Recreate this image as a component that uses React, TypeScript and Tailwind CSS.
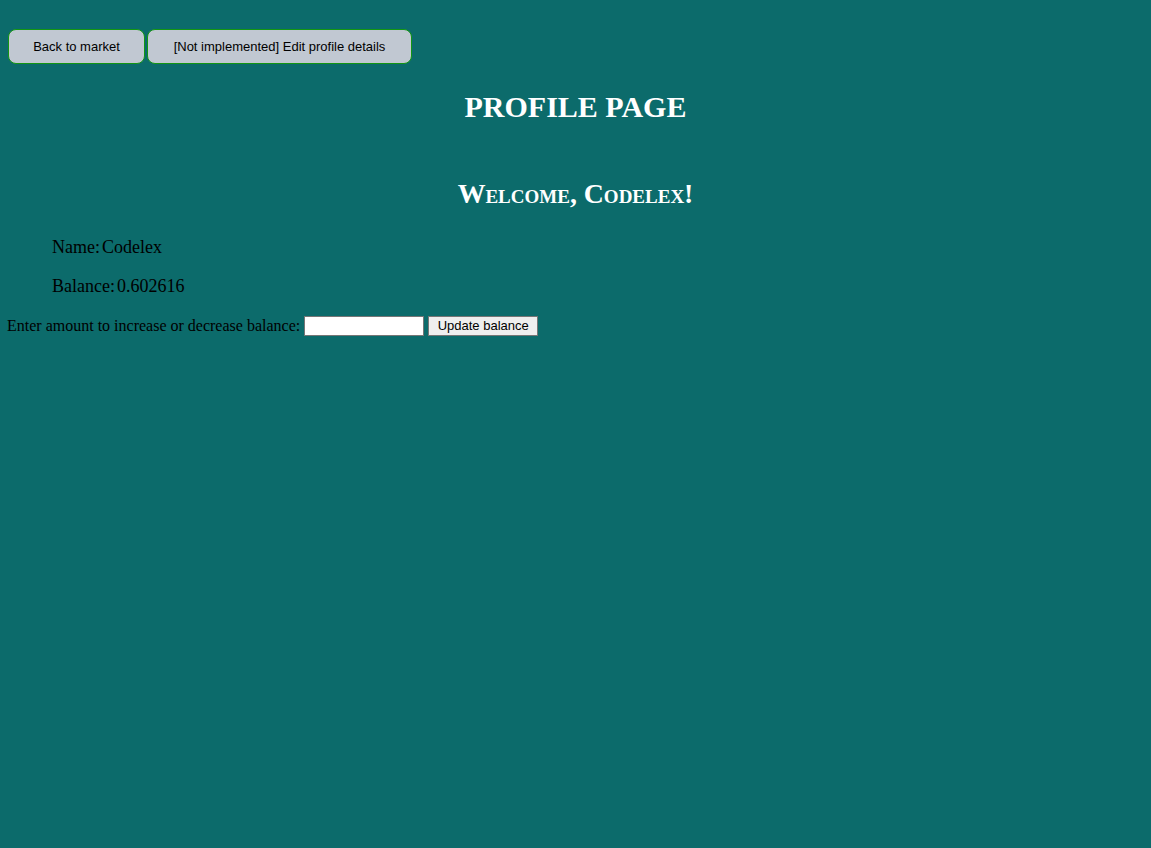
import React from "react";

export default function App() {
  return (
    <div className="min-h-[848px] w-full bg-[#0c6b6b] pt-[29px] font-['Liberation_Serif',serif] text-black">
      <div className="flex gap-[2px] pl-2">
        <button className="h-[35px] w-[137px] rounded-[8px] border border-[#139613] bg-[#c1c8d2] font-['Liberation_Sans',sans-serif] text-[13px] text-black">
          Back to market
        </button>
        <button className="h-[35px] w-[265px] rounded-[8px] border border-[#139613] bg-[#c1c8d2] font-['Liberation_Sans',sans-serif] text-[13px] text-black">
          [Not implemented] Edit profile details
        </button>
      </div>
      <h1 className="mt-[25px] text-center text-[30px] font-bold leading-[36px] text-white">
        PROFILE PAGE
      </h1>
      <h2 className="mt-[53px] text-center text-[27.8px] font-bold leading-[32px] text-white [font-variant:small-caps]">
        Welcome, Codelex!
      </h2>
      <div className="mt-[26px] flex flex-col gap-[17px] pl-[52px] text-[18px] leading-[22px]">
        <div className="flex gap-[2px]">
          <span>Name:</span>
          <span>Codelex</span>
        </div>
        <div className="flex gap-[2px]">
          <span>Balance:</span>
          <span>0.602616</span>
        </div>
      </div>
      <div className="mt-[17px] flex items-center pl-[7px] text-[16px]">
        <span>Enter amount to increase or decrease balance:</span>
        <input className="ml-[4px] h-[20px] w-[120px] border border-[#767676] bg-white" />
        <button className="ml-[4px] h-[20px] w-[110px] border border-[#767676] bg-[#efefef] font-['Liberation_Sans',sans-serif] text-[13px] leading-[18px] text-black">
          Update balance
        </button>
      </div>
    </div>
  );
}
